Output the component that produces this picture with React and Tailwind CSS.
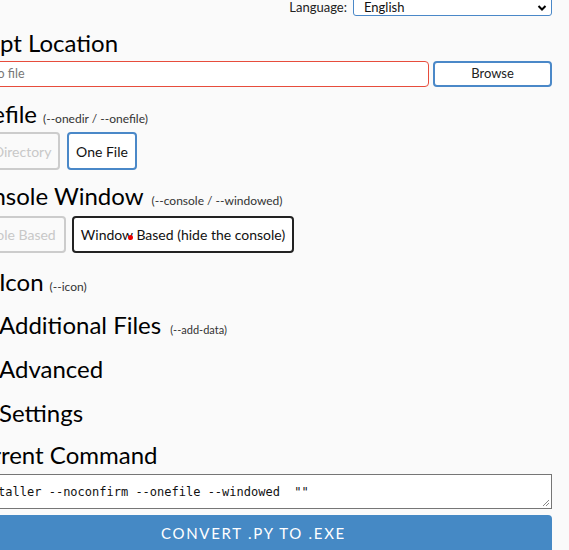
export default function App() {
  const font = { fontFamily: "Lato, 'Noto Sans', sans-serif" };
  return (
    <div className="relative w-[569px] h-[550px] overflow-hidden bg-[#fafafa] text-black" style={font}>
      {/* language bar */}
      <div className="flex justify-end items-start pr-[17px] h-[16px]">
        <span className="text-[13px] leading-[16px] text-[#222] mr-[6px] mt-[-1px]">Language:</span>
        <div className="w-[199px] h-[17px] mt-[-1px] border border-[#4a88c8] rounded-b-[3px] bg-white flex items-center justify-between pl-[10px] pr-[4px]">
          <span className="text-[13px] leading-[15px] text-[#111]">English</span>
          <svg width="10" height="8" viewBox="0 0 10 8"><path d="M1.5 2 L5 5.5 L8.5 2" stroke="#000" strokeWidth="2" fill="none" /></svg>
        </div>
      </div>

      <div className="ml-[-45px] w-[597px]">
        <h2 className="flex items-baseline h-[28px] text-[24px] leading-[28px] mt-[13px] pl-[6px]">Script Location</h2>
        <div className="flex mt-[4px]">
          <div className="w-[474px] h-[26px] border border-[#e74c3c] rounded-[4px] bg-white flex items-center pl-[9px]">
            <span className="text-[12.5px] text-[#777]">Path to file</span>
          </div>
          <div className="w-[119px] h-[26px] ml-[4px] border-2 border-[#4a88c8] rounded-[4px] bg-white flex items-center justify-center text-[13px] text-[#222]">Browse</div>
        </div>

        <h2 className="flex items-baseline h-[28px] text-[24px] leading-[28px] mt-[13px] pl-[5px]">Onefile<span className="text-[12px] leading-[14px] text-[#333] ml-[6px]">(--onedir / --onefile)</span></h2>
        <div className="flex mt-[4px] gap-[7px]">
          <div className="w-[105px] h-[38px] border-2 border-[#ccc] rounded-[4px] flex items-center justify-center text-[14px] text-[#c8c8c8]">One Directory</div>
          <div className="w-[70px] h-[38px] border-2 border-[#4a88c8] rounded-[4px] bg-white flex items-center justify-center text-[14px] text-[#111]">One File</div>
        </div>

        <h2 className="flex items-baseline h-[28px] text-[24px] leading-[28px] mt-[12px] pl-[8px]">Console Window<span className="text-[12px] leading-[14px] text-[#333] ml-[8px]">(--console / --windowed)</span></h2>
        <div className="flex mt-[6px] gap-[6px]">
          <div className="w-[111px] h-[37px] border-2 border-[#ccc] rounded-[4px] flex items-center justify-center text-[14px] text-[#c8c8c8]">Console Based</div>
          <div className="w-[222px] h-[37px] border-2 border-[#222] rounded-[4px] bg-white flex items-center justify-center text-[14px] text-[#111]">Window Based (hide the console)</div>
        </div>

        <h2 className="flex items-baseline h-[28px] text-[24px] leading-[28px] mt-[15px] pl-[44px]">Icon<span className="text-[12px] leading-[14px] text-[#333] ml-[6px]">(--icon)</span></h2>
        <h2 className="flex items-baseline h-[28px] text-[24px] leading-[28px] mt-[15px] pl-[44px]">Additional Files<span className="text-[11px] leading-[14px] text-[#333] ml-[9px]">(--add-data)</span></h2>
        <h2 className="flex items-baseline h-[28px] text-[24px] leading-[28px] mt-[16px] pl-[44px]">Advanced</h2>
        <h2 className="flex items-baseline h-[28px] text-[24px] leading-[28px] mt-[16px] pl-[44px]">Settings</h2>
        <h2 className="flex items-baseline h-[28px] text-[24px] leading-[28px] mt-[14px] pl-[8px]">Current Command</h2>
        <div className="relative mt-[5px] h-[35px] border border-[#767676] bg-white pl-[6px] pt-[3px]">
          <span className="text-[12px] leading-[14px] whitespace-pre text-[#111]" style={{ fontFamily: "'DejaVu Sans Mono', monospace" }}>pyinstaller --noconfirm --onefile --windowed  ""</span>
          <svg className="absolute right-[1px] bottom-[1px]" width="9" height="9" viewBox="0 0 9 9"><path d="M8 2 L2 8 M8 5 L5 8" stroke="#888" strokeWidth="1" /></svg>
        </div>
        <div className="mt-[6px] h-[45px] bg-[#4589c5] rounded-t-[4px] flex items-start justify-center pt-[7px] text-white text-[15px] tracking-[1.7px]">CONVERT .PY TO .EXE</div>
      </div>

      <div className="absolute left-[128px] top-[235px] w-[5px] h-[5px] rounded-full bg-[#e00]" />
    </div>
  );
}
